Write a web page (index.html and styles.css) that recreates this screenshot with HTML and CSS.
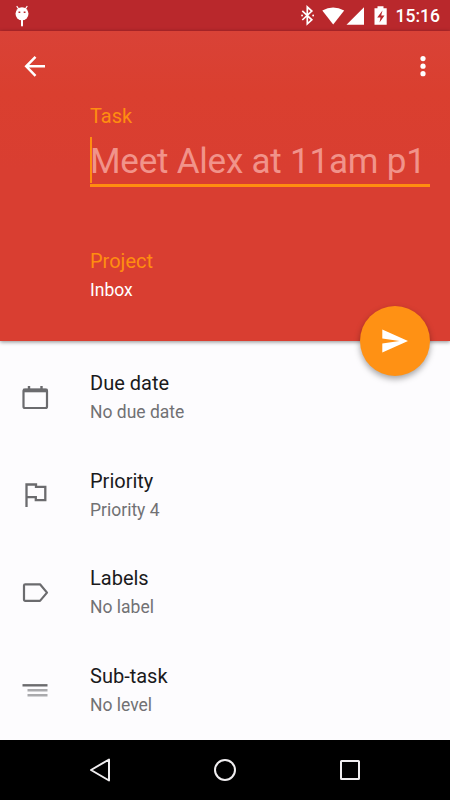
FILE: index.html
```html
<!DOCTYPE html>
<html lang="en">
<head>
<meta charset="utf-8">
<title>Add task</title>
<link rel="stylesheet" href="styles.css">
</head>
<body>
<div class="screen">
  <div class="status">
    <svg class="bug" width="16" height="24" viewBox="0 0 16 24"><path d="M3 1.500l2 3M13 1.500l-2 3" stroke="#fff" stroke-width="1.300" stroke-linecap="round"/><path d="M8 14v6.500" stroke="#fff" stroke-width="2" stroke-linecap="round"/><circle cx="8" cy="8.800" r="6.500" fill="#fff"/><path d="M4.500 7.200h1.800M9.700 7.200h1.800" stroke="#b9282c" stroke-width="1.400"/></svg>
    <svg class="indicators" width="100" height="22" viewBox="0 0 100 22">
      <path d="M1.300 5.800l9.500 9-4.500 4V2l4.500 4-9.500 9" fill="none" stroke="#fff" stroke-width="1.700"/>
      <path d="M1 10.500h.1M12.100 10.500h.1" stroke="#fff" stroke-width="1.800" stroke-linecap="round"/>
      <path d="M21.300 5.500Q32 -.300 43.200 5.500L32.200 19.500z" fill="#fff"/>
      <path d="M45.500 19.800H63V2.300z" fill="#fff"/>
      <path d="M73.500 3.200h3V1.200h6v2h3.200v16.600H73.500z" fill="#fff"/>
      <path d="M81.500 5.500l-5.300 7h3.300l-1 5 5-7h-3.300z" fill="#b9282c"/>
    </svg>
    <span class="clock">15:16</span>
  </div>
  <div class="header">
    <div class="toolbar">
      <svg width="24" height="24" viewBox="0 0 24 24"><path d="M22 12.300H3.500M12.500 2.800L3.200 12.300l9.300 9.500" fill="none" stroke="#fff" stroke-width="2.500"/></svg>
      <svg width="8" height="24" viewBox="0 0 8 24" fill="#fff"><circle cx="4" cy="4.600" r="2.600"/><circle cx="4" cy="12.200" r="2.600"/><circle cx="4" cy="19.700" r="2.600"/></svg>
    </div>
    <div class="label">Task</div>
    <div class="field"><span class="hint">Meet Alex at 11am p1</span></div>
    <div class="label project">Project</div>
    <div class="value">Inbox</div>
    <div class="fab"><svg width="28" height="26" viewBox="0 0 28 26"><path d="M1.300 1.500L27 13 1.300 24.500v-9L18.500 13 1.300 10.500z" fill="#fff"/></svg></div>
  </div>
  <div class="list">
    <div class="row">
      <svg class="icon" width="28" height="28" viewBox="0 0 28 28"><rect x="2.500" y="5.500" width="23.500" height="18.500" rx="1.500" fill="none" stroke="#6b6b6e" stroke-width="2.200"/><path d="M2 6.500h24.500" stroke="#6b6b6e" stroke-width="3.600"/><path d="M8 2v4M20.500 2v4" stroke="#6b6b6e" stroke-width="2.400"/></svg>
      <div><div class="title">Due date</div><div class="sub">No due date</div></div>
    </div>
    <div class="row">
      <svg class="icon" width="28" height="28" viewBox="0 0 28 28"><path d="M5.500 25V2.500h9.500v2.300h9.300v13.400h-9.500v-3H5.500" fill="none" stroke="#6b6b6e" stroke-width="2.300"/></svg>
      <div><div class="title">Priority</div><div class="sub">Priority 4</div></div>
    </div>
    <div class="row">
      <svg class="icon" width="28" height="28" viewBox="0 0 28 28"><path d="M4.300 5.300h14.700L26 13.600l-7 8.300H4.300q-1.300 0-1.300-1.300V6.600q0-1.300 1.300-1.300z" fill="none" stroke="#6b6b6e" stroke-width="2.200" stroke-linejoin="round"/></svg>
      <div><div class="title">Labels</div><div class="sub">No label</div></div>
    </div>
    <div class="row">
      <svg class="icon" width="28" height="28" viewBox="0 0 28 28"><path d="M1.500 8.300h25" stroke="#6b6b6e" stroke-width="2.400"/><path d="M6.500 13.300h20M6.500 18.300h20" stroke="#aaaaad" stroke-width="2.400"/></svg>
      <div><div class="title">Sub-task</div><div class="sub">No level</div></div>
    </div>
  </div>
  <div class="nav">
    <svg width="24" height="26" viewBox="0 0 24 26"><path d="M21 2.500v21L3 13z" fill="none" stroke="#f0eef0" stroke-width="2" stroke-linejoin="round"/></svg>
    <svg width="24" height="26" viewBox="0 0 24 26"><circle cx="12" cy="13" r="10" fill="none" stroke="#f0eef0" stroke-width="2"/></svg>
    <svg width="24" height="26" viewBox="0 0 24 26"><rect x="3" y="4" width="18" height="18" rx=".5" fill="none" stroke="#f0eef0" stroke-width="2"/></svg>
  </div>
</div>
</body>
</html>
```
FILE: styles.css
```css
* { box-sizing: border-box; }
body { margin: 0; font-family: Roboto, sans-serif; }
svg { display: block; flex: none; }
.screen { width: 450px; height: 800px; display: flex; flex-direction: column; background: #fdfcfe; overflow: hidden; }
.status { height: 31px; flex: none; display: flex; align-items: center; padding: 1px 10px 0 14px; background: #b9282c; color: #fff; }
.bug { margin-top: 1px; }
.indicators { margin-left: auto; margin-right: -11px; }
.clock { width: 50px; text-align: right; font-size: 17.5px; font-weight: 500; line-height: 22px; white-space: nowrap; }
.header { height: 310px; flex: none; position: relative; z-index: 1; padding: 0 20px 0 90px; background: linear-gradient(#d94237, #da3f2f 20%, #d93e31 45%, #d93e31); box-shadow: 0 1px 4px rgba(0, 0, 0, .45); }
.toolbar { height: 70px; display: flex; align-items: center; justify-content: space-between; margin: 0 3.5px 3px -67px; }
.label { font-size: 20px; line-height: 24px; color: #ff8d10; }
.field { height: 59px; padding-top: 9px; border-bottom: 3px solid #ff8d10; }
.hint { display: block; height: 46px; border-left: 2px solid #ff8d10; text-indent: -2px; font-size: 35px; line-height: 49px; letter-spacing: -.22px; color: #f1938a; white-space: nowrap; }
.project { margin-top: 62px; }
.value { margin-top: 6px; font-size: 17.5px; line-height: 22px; color: #fff; }
.fab { position: absolute; right: 20px; bottom: -35px; width: 70px; height: 70px; border-radius: 50%; background: #ff9114; display: flex; align-items: center; justify-content: center; box-shadow: 0 3px 6px rgba(0, 0, 0, .35); }
.list { flex: 1; }
.row { height: 97.5px; display: flex; align-items: flex-start; padding: 30px 20px 0 21px; }
.icon { width: 28px; margin: 13px 41px 0 0; }
.title { font-size: 20px; line-height: 24px; color: #1a1a1c; }
.sub { margin-top: 6px; font-size: 17.5px; line-height: 22px; color: #717174; }
.nav { height: 60px; flex: none; display: flex; justify-content: space-between; align-items: center; padding: 0 88px; background: #000; }
```
